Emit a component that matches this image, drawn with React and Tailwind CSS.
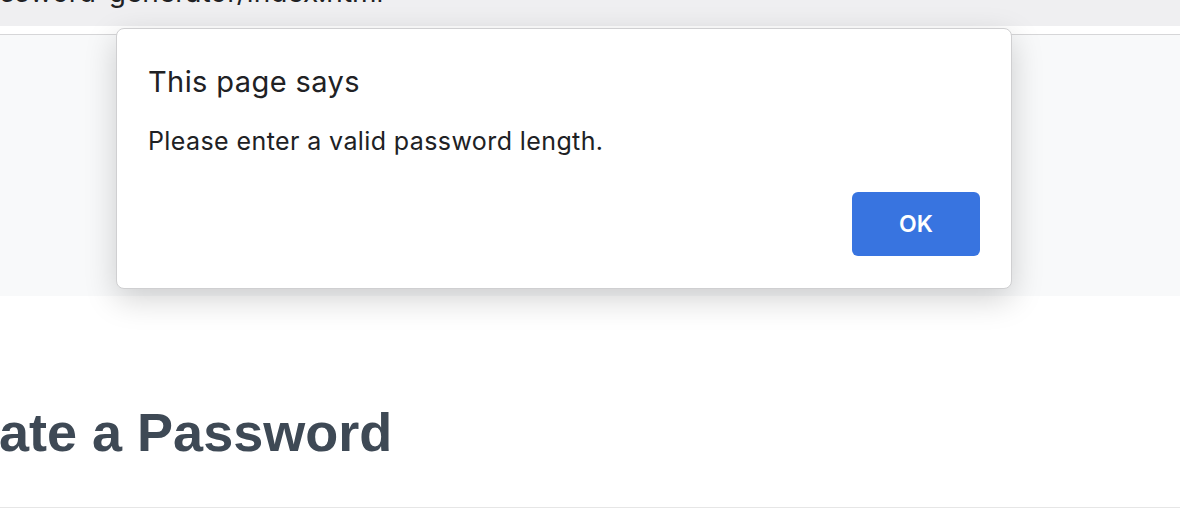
import React from "react";

const AlertDialog = () => {
  return (
    <div className="absolute left-[116px] top-[28px] w-[896px] h-[261px] bg-white rounded-[8px] border border-[#cfcfd1] shadow-[0_10px_32px_rgba(0,0,0,0.18)] font-['Inter',sans-serif] text-[#202124]">
      <div className="pt-[35px] pl-[31px]">
        <h2 className="text-[29px] leading-[36px] tracking-[0.4px]">This page says</h2>
        <p className="mt-[26px] text-[25px] leading-[30px] tracking-[0.4px]">
          Please enter a valid password length.
        </p>
      </div>
      <button className="absolute right-[31px] bottom-[32px] w-[128px] h-[64px] rounded-[6px] bg-[#3874e0] text-white text-[23px] font-semibold">
        OK
      </button>
    </div>
  );
};

const App = () => {
  return (
    <div className="relative w-[1180px] h-[508px] overflow-hidden bg-white">
      <div className="h-[26px] bg-[#efeff1] overflow-hidden">
        <div className="-mt-[25px] text-[28px] leading-[34px] text-[#202124] font-['Inter',sans-serif] whitespace-nowrap">
          ssword-generator/index.html
        </div>
      </div>
      <div className="h-[9px] bg-white border-b border-[#d6d6d8]" />

      <div className="h-[261px] bg-[#f8f9fa]" />

      <div className="h-[212px] border-b border-[#e6e6e6]">
        <h1 className="pt-[104px] -ml-[1px] text-[54px] leading-[64px] font-bold text-[#3e4955] font-['Liberation_Sans',Arial,sans-serif] whitespace-nowrap">
          ate a Password
        </h1>
      </div>

      <AlertDialog />
    </div>
  );
};

export default App;
